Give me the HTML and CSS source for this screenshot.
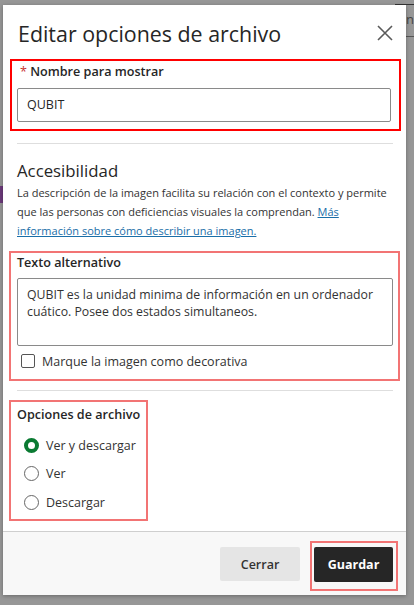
FILE: index.html
```html
<!DOCTYPE html>
<html lang="es">
<head>
<meta charset="utf-8">
<title>Editar opciones de archivo</title>
<link rel="stylesheet" href="styles.css">
</head>
<body>
<div class="backdrop" aria-hidden="true">
  <div class="bg-line bg-line-top"></div>
  <div class="bg-text">ni</div>
  <div class="bg-line bg-line-mid"></div>
  <div class="bg-mark"></div>
</div>
<div class="dialog" role="dialog" aria-labelledby="dlg-title">
  <div class="dialog-header">
    <h1 id="dlg-title" class="dialog-title">Editar opciones de archivo</h1>
    <button class="close-btn" aria-label="Cerrar">
      <svg width="16" height="16" viewBox="0 0 16 16"><path d="M1 1 L15 15 M15 1 L1 15" stroke="#5a5a5a" stroke-width="1.6" fill="none"/></svg>
    </button>
  </div>
  <div class="dialog-body">
    <div class="mark mark-strong name-block">
      <label class="field-label"><span class="req">*</span> Nombre para mostrar</label>
      <div class="text-input">QUBIT</div>
    </div>
    <hr class="sep sep-1">
    <h2 class="section-title">Accesibilidad</h2>
    <p class="section-desc">La descripción de la imagen facilita su relación con el contexto y permite que las personas con deficiencias visuales la comprendan. <a href="#" class="link">Más información sobre cómo describir una imagen.</a></p>
    <div class="mark alt-block">
      <label class="field-label plain">Texto alternativo</label>
      <div class="text-area">QUBIT es la unidad minima de información en un ordenador cuático. Posee dos estados simultaneos.</div>
      <div class="check-row">
        <span class="checkbox"></span>
        <span class="check-label">Marque la imagen como decorativa</span>
      </div>
    </div>
    <hr class="sep sep-2">
    <div class="mark options-block">
      <div class="field-label plain">Opciones de archivo</div>
      <div class="radio-row"><span class="radio checked"></span><span>Ver y descargar</span></div>
      <div class="radio-row"><span class="radio"></span><span>Ver</span></div>
      <div class="radio-row"><span class="radio"></span><span>Descargar</span></div>
    </div>
  </div>
  <div class="dialog-footer">
    <button class="btn btn-secondary">Cerrar</button>
    <div class="mark save-wrap">
      <button class="btn btn-primary">Guardar</button>
    </div>
  </div>
</div>
</body>
</html>
```
FILE: styles.css
```css
* { box-sizing: border-box; }
html, body {
  margin: 0;
  padding: 0;
}
body {
  width: 414px;
  height: 605px;
  overflow: hidden;
  position: relative;
  background: #979797;
  font-family: "Open Sans", "Noto Sans", sans-serif;
  color: #262626;
}
.backdrop {
  position: absolute;
  inset: 0;
}
.bg-line {
  position: absolute;
  background: #333;
  height: 1px;
}
.bg-line-top { top: 4px; left: 395px; width: 19px; }
.bg-line-mid { top: 36px; left: 405px; width: 9px; background: #555; }
.bg-text {
  position: absolute;
  top: 10px;
  left: 406px;
  font-size: 13px;
  color: #444;
}
.bg-mark {
  position: absolute;
  top: 186px;
  left: 0;
  width: 3px;
  height: 17px;
  background: #6b3a7a;
}
.dialog {
  position: absolute;
  left: 3px;
  top: 5px;
  width: 403px;
  height: 590px;
  background: #fff;
  display: flex;
  flex-direction: column;
  box-shadow: 0 1px 4px rgba(0,0,0,0.3);
}
.dialog-header {
  height: 54px;
  display: flex;
  align-items: flex-start;
  justify-content: space-between;
  padding: 14px 13px 0 15px;
}
.dialog-title {
  margin: 0;
  font-size: 21.4px;
  font-weight: 400;
  line-height: 30px;
  color: #262626;
}
.close-btn {
  border: 0;
  background: none;
  padding: 0;
  margin-top: 6px;
  width: 16px;
  height: 16px;
  display: block;
}
.close-btn svg { display: block; }
.dialog-body {
  flex: 1;
  padding: 0 13px 0 14px;
  display: flex;
  flex-direction: column;
}
.mark {
  border: 2px solid #f27474;
}
.mark-strong {
  border-color: #f00;
}
.name-block {
  margin: 0 -8px 0 -7px;
  padding: 1px 8px 7px 5px;
}
.field-label {
  display: block;
  font-size: 12.6px;
  line-height: 20px;
  font-weight: 600;
  color: #262626;
  padding-left: 3px;
  margin-bottom: 6px;
}
.field-label.plain { padding-left: 0; }
.req {
  color: #c8312f;
  font-weight: 400;
}
.text-input {
  height: 34px;
  border: 1px solid #8a8a8a;
  border-radius: 2px;
  padding: 0 9px;
  font-size: 12.5px;
  line-height: 32px;
  color: #262626;
}
.sep {
  border: 0;
  height: 1px;
  background: #dedede;
  margin: 0;
}
.sep-1 { margin-top: 12px; }
.section-title {
  margin: 15px 0 0;
  font-size: 16.8px;
  font-weight: 400;
  line-height: 24px;
  color: #262626;
}
.section-desc {
  margin: 0;
  font-size: 11px;
  line-height: 19px;
  color: #333;
}
.link {
  color: #1a6ea8;
  text-decoration: underline;
}
.alt-block {
  margin: 11px -7px 0 -8px;
  padding: 0 5px 8px 6px;
}
.alt-block .field-label { margin-bottom: 5px; }
.text-area {
  height: 68px;
  border: 1px solid #8a8a8a;
  border-radius: 2px;
  padding: 7px 9px;
  font-size: 12.3px;
  line-height: 17px;
  color: #333;
}
.check-row {
  display: flex;
  align-items: center;
  height: 20px;
  margin-top: 5px;
  padding-left: 4px;
  font-size: 12.5px;
  color: #333;
}
.checkbox {
  width: 14px;
  height: 14px;
  border: 1px solid #555;
  border-radius: 2px;
  margin-right: 7px;
  flex: none;
  background: #fff;
}
.sep-2 { margin-top: 9px; }
.options-block {
  align-self: flex-start;
  margin: 9px 0 0 -8px;
  padding: 3px 6px 2px 6px;
}
.options-block .field-label { margin-bottom: 6px; }
.radio-row {
  display: flex;
  align-items: center;
  height: 28.5px;
  padding-left: 7px;
  font-size: 12.5px;
  color: #333;
}
.radio {
  width: 15px;
  height: 15px;
  border-radius: 50%;
  border: 1px solid #666;
  margin-right: 7px;
  flex: none;
  background: #fff;
}
.radio.checked {
  border: 4.5px solid #0a7a32;
}
.dialog-footer {
  height: 64px;
  border-top: 1px solid #cfcfcf;
  background: #f8f8f8;
  display: flex;
  justify-content: flex-end;
  align-items: flex-start;
  padding: 9px 8px 0 0;
  gap: 10px;
}
.btn {
  height: 35px;
  border: 0;
  border-radius: 2px;
  font-family: inherit;
  font-size: 12.5px;
  padding: 0;
}
.btn-secondary {
  margin-top: 6px;
  width: 80px;
  height: 34px;
  background: #e5e5e5;
  color: #333;
  font-weight: 600;
}
.save-wrap {
  padding: 4px 3px 7px 2px;
}
.btn-primary {
  display: block;
  width: 79px;
  background: #262626;
  color: #fff;
  font-weight: 700;
}
```
